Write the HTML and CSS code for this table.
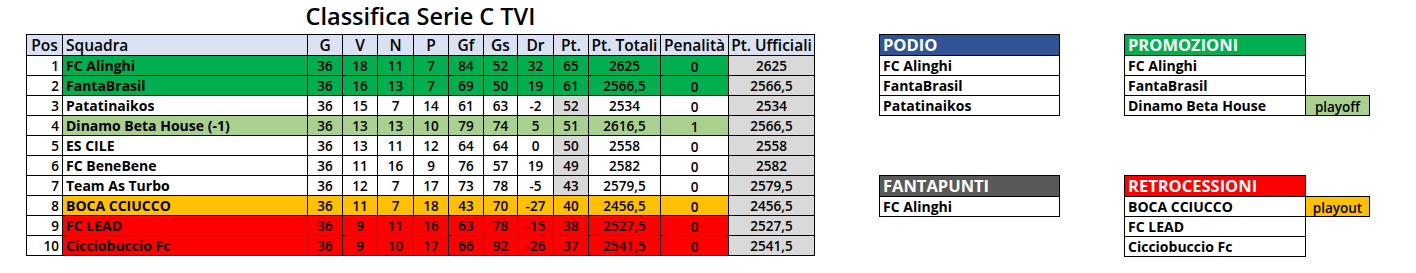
FILE: index.html
```html
<!DOCTYPE html>
<html lang="it">
<head>
<meta charset="utf-8">
<title>Classifica Serie C TVI</title>
<link rel="stylesheet" href="styles.css">
</head>
<body>
<div class="page">
  <section class="standings">
    <h1 class="title">Classifica Serie C TVI</h1>
    <table class="table">
      <colgroup>
        <col class="c-pos"><col class="c-team"><col class="c-n"><col class="c-n"><col class="c-n3"><col class="c-n"><col class="c-n"><col class="c-n2"><col class="c-n3"><col class="c-n"><col class="c-tot"><col class="c-pen"><col class="c-uff">
      </colgroup>
      <thead>
        <tr class="head">
          <th>Pos</th><th class="left">Squadra</th><th>G</th><th>V</th><th>N</th><th>P</th><th>Gf</th><th>Gs</th><th>Dr</th><th>Pt.</th><th>Pt. Totali</th><th>Penalità</th><th>Pt. Ufficiali</th>
        </tr>
      </thead>
      <tbody>
        <tr class="green">
          <td class="pos">1</td><td class="team">FC Alinghi</td><td>36</td><td>18</td><td>11</td><td>7</td><td>84</td><td>52</td><td>32</td><td>65</td><td>2625</td><td class="pen">0</td><td class="uff">2625</td>
        </tr>
        <tr class="green">
          <td class="pos">2</td><td class="team">FantaBrasil</td><td>36</td><td>16</td><td>13</td><td>7</td><td>69</td><td>50</td><td>19</td><td>61</td><td>2566,5</td><td class="pen">0</td><td class="uff">2566,5</td>
        </tr>
        <tr>
          <td class="pos">3</td><td class="team">Patatinaikos</td><td>36</td><td>15</td><td>7</td><td>14</td><td>61</td><td>63</td><td>-2</td><td class="pts">52</td><td>2534</td><td class="pen">0</td><td class="uff">2534</td>
        </tr>
        <tr class="light">
          <td class="pos">4</td><td class="team">Dinamo Beta House (-1)</td><td>36</td><td>13</td><td>13</td><td>10</td><td>79</td><td>74</td><td>5</td><td>51</td><td>2616,5</td><td class="pen">1</td><td class="uff">2566,5</td>
        </tr>
        <tr>
          <td class="pos">5</td><td class="team">ES CILE</td><td>36</td><td>13</td><td>11</td><td>12</td><td>64</td><td>64</td><td>0</td><td class="pts">50</td><td>2558</td><td class="pen">0</td><td class="uff">2558</td>
        </tr>
        <tr>
          <td class="pos">6</td><td class="team">FC BeneBene</td><td>36</td><td>11</td><td>16</td><td>9</td><td>76</td><td>57</td><td>19</td><td class="pts">49</td><td>2582</td><td class="pen">0</td><td class="uff">2582</td>
        </tr>
        <tr>
          <td class="pos">7</td><td class="team">Team As Turbo</td><td>36</td><td>12</td><td>7</td><td>17</td><td>73</td><td>78</td><td>-5</td><td class="pts">43</td><td>2579,5</td><td class="pen">0</td><td class="uff">2579,5</td>
        </tr>
        <tr class="orange">
          <td class="pos">8</td><td class="team">BOCA CCIUCCO</td><td>36</td><td>11</td><td>7</td><td>18</td><td>43</td><td>70</td><td>-27</td><td>40</td><td>2456,5</td><td class="pen">0</td><td class="uff">2456,5</td>
        </tr>
        <tr class="red">
          <td class="pos">9</td><td class="team">FC LEAD</td><td>36</td><td>9</td><td>11</td><td>16</td><td>63</td><td>78</td><td>-15</td><td>38</td><td>2527,5</td><td class="pen">0</td><td class="uff">2527,5</td>
        </tr>
        <tr class="red">
          <td class="pos">10</td><td class="team">Cicciobuccio Fc</td><td>36</td><td>9</td><td>10</td><td>17</td><td>66</td><td>92</td><td>-26</td><td>37</td><td>2541,5</td><td class="pen">0</td><td class="uff">2541,5</td>
        </tr>
      </tbody>
    </table>
  </section>

  <div class="side">
    <div class="side-col">
      <table class="box">
        <tr><th class="box-head blue">PODIO</th></tr>
        <tr><td class="box-cell">FC Alinghi</td></tr>
        <tr><td class="box-cell">FantaBrasil</td></tr>
        <tr><td class="box-cell">Patatinaikos</td></tr>
      </table>
      <table class="box">
        <tr><th class="box-head grey">FANTAPUNTI</th></tr>
        <tr><td class="box-cell">FC Alinghi</td></tr>
      </table>
    </div>
    <div class="side-col wide">
      <table class="box">
        <colgroup><col class="c-box"><col class="c-note"></colgroup>
        <tr><th class="box-head green-h">PROMOZIONI</th><td class="note-empty"></td></tr>
        <tr><td class="box-cell">FC Alinghi</td><td class="note-empty"></td></tr>
        <tr><td class="box-cell">FantaBrasil</td><td class="note-empty"></td></tr>
        <tr><td class="box-cell">Dinamo Beta House</td><td class="note playoff">playoff</td></tr>
      </table>
      <table class="box">
        <colgroup><col class="c-box"><col class="c-note"></colgroup>
        <tr><th class="box-head red-h">RETROCESSIONI</th><td class="note-empty"></td></tr>
        <tr><td class="box-cell">BOCA CCIUCCO</td><td class="note playout">playout</td></tr>
        <tr><td class="box-cell">FC LEAD</td><td class="note-empty"></td></tr>
        <tr><td class="box-cell">Cicciobuccio Fc</td><td class="note-empty"></td></tr>
      </table>
    </div>
  </div>
</div>
</body>
</html>
```

FILE: styles.css
```css
* { box-sizing: border-box; }

html, body {
  margin: 0;
  padding: 0;
  background: #ffffff;
}

body {
  font-family: "Open Sans", Lato, "Liberation Sans", sans-serif;
  color: #000;
}

.page {
  display: flex;
  align-items: flex-start;
  gap: 64px;
  padding-left: 26px;
}

.standings {
  display: flex;
  flex-direction: column;
  width: 789px;
}

.title {
  margin: 0;
  height: 34px;
  padding-top: 1px;
  line-height: 30px;
  font-size: 23.5px;
  font-weight: 600;
  text-align: center;
}

.table {
  border-collapse: collapse;
  table-layout: fixed;
  width: 789px;
  font-size: 13.5px;
  font-weight: 600;
}

.c-pos { width: 36px; }
.c-team { width: 245px; }
.c-n { width: 35px; }
.c-n2 { width: 34px; }
.c-n3 { width: 36px; }
.c-tot { width: 72px; }
.c-pen { width: 68px; }
.c-uff { width: 86px; }

.table th,
.table td {
  border: 1px solid #000;
  padding: 0 2px;
  text-align: center;
  white-space: nowrap;
  overflow: hidden;
  line-height: 16px;
}

.table .head th {
  height: 21px;
  background: #d9e1f2;
  font-size: 15.5px;
  font-weight: 600;
  line-height: 18px;
  padding: 0 1px;
}

.table .head th.left { text-align: left; padding-left: 3px; }

.table td { height: 20px; }

.table td.pos {
  text-align: right;
  background: #fff;
  padding-right: 3px;
}

.table td.team {
  text-align: left;
  padding-left: 3px;
  font-size: 14px;
  font-weight: 700;
}

.table td.pen { padding-top: 3px; }

.green td { background: #00b050; }
.light td { background: #a9d08e; }
.orange td { background: #ffc000; }
.red td { background: #ff0000; }

.table td.pts { background: #d9d9d9; }
.table td.uff { background: #d9d9d9; }

.side {
  display: flex;
  gap: 64px;
  padding-top: 34px;
}

.side-col {
  display: flex;
  flex-direction: column;
  gap: 59px;
  width: 181px;
}

.side-col.wide { width: 245px; }

.box {
  border-collapse: collapse;
  table-layout: fixed;
  width: 100%;
  font-size: 14px;
  font-weight: 700;
}

.c-box { width: 181px; }
.c-note { width: 64px; }

.box-head {
  height: 21px;
  border: 1px solid #000;
  padding: 0 3px;
  text-align: left;
  color: #fff;
  font-size: 16.5px;
  font-weight: 700;
  line-height: 18px;
}

.blue { background: #305496; }
.grey { background: #595959; }
.green-h { background: #00b050; }
.red-h { background: #ff0000; }

.box-cell {
  height: 20px;
  border: 1px solid #000;
  padding: 0 3px;
  white-space: nowrap;
  line-height: 16px;
}

.note-empty {
  border: none;
  padding: 0;
}

.note {
  border: 1px solid #000;
  text-align: center;
  font-size: 13.5px;
  font-weight: 600;
  line-height: 16px;
  padding: 2px 0 0;
}

.playoff { background: #a9d08e; }
.playout { background: #ffc000; }
```
